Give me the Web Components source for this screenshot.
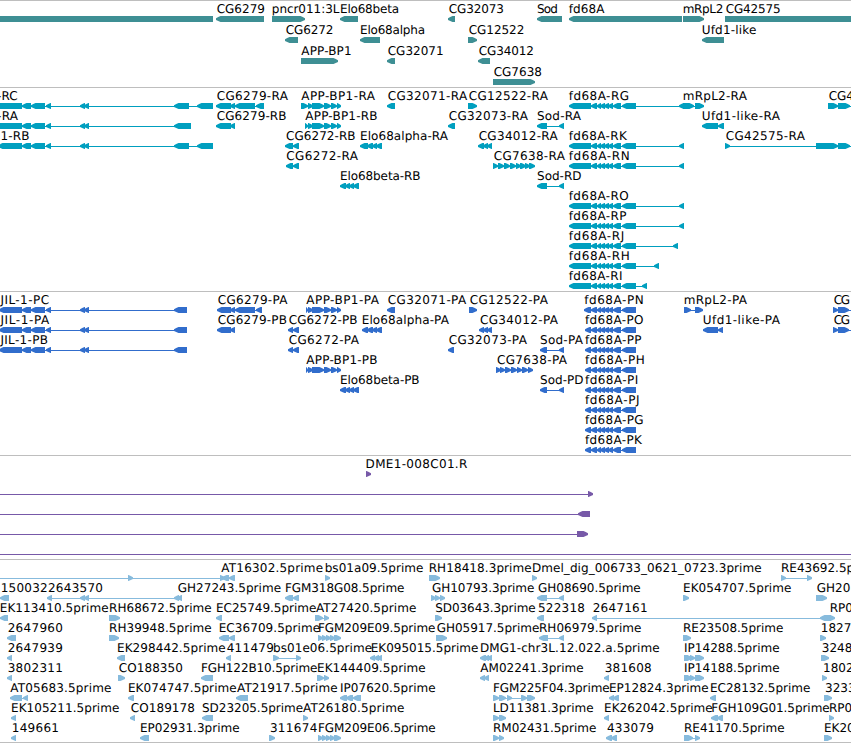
<!DOCTYPE html>
<html lang="en">
<head>
<meta charset="utf-8">
<title>Genome tracks</title>
<style>
    body {
        margin: 0;
        background: #fff;
        color: #000;
        font: 12px "DejaVu Sans", Verdana, sans-serif;
        overflow: hidden;
    }
</style>
</head>
<body>
<genome-browser></genome-browser>

<script>
// One feature per entry: [label, first ink x, last ink x (0 = natural width), glyph]
// Glyph: "<" or ">" is the strand, then the exons as start:end
const JIL = '22:31 31:45 46:51 80:85 84:89 ';
const APP = '308:313 312:324 324:331 331:337 337:341';
const FD = '591:597 597:601 600:605 604:609 608:613 613:621 622:636';
const FGM = '>318:323 322:327 326:331 330:335 334:341';

const TRACKS = [
    {
        color: '#3e8f94', row: 21, height: 87,
        rows: [
            [
                ['', 0, 0, '<-20:213'],
                ['CG6279', 216.7, 264.3, '<216:264'],
                ['pncr011:3L', 272.8, 339.7, '>272:305'],
                ['Elo68beta', 341, 398.7, '<340:358'],
                ['CG32073', 448.7, 503.3, '<448:455'],
                ['Sod', 537, 557.3, '<537:562'],
                ['fd68A', 568.7, 605.3, '<569:682'],
                ['mRpL2', 683.7, 722.7, '>683:704'],
                ['CG42575', 725.7, 780, '>725:880'],
            ],
            [
                ['CG6272', 285.7, 332.7, '<285:298'],
                ['Elo68alpha', 361, 424.7, '<360:380'],
                ['CG12522', 468.7, 523.7, '>468:477'],
                ['Ufd1-like', 702.7, 756, '<702:724'],
            ],
            [
                ['APP-BP1', 301.3, 351, '>301:338'],
                ['CG32071', 387.7, 443, '<387:395'],
                ['CG34012', 478.7, 533.3, '<478:490'],
            ],
            [
                ['CG7638', 493.7, 541.3, '>493:535'],
            ],
        ],
    },
    {
        color: '#009fbf', row: 20, height: 204,
        rows: [
            [
                ['-RC', -3, 17.3, '<-20:22 ' + JIL + '174:189 197:213'],
                ['CG6279-RA', 216.7, 288.7, '<216:231 230:235 235:255 256:264'],
                ['APP-BP1-RA', 301.3, 375.7, '>301:308 ' + APP],
                ['CG32071-RA', 387.7, 468, '<387:395'],
                ['CG12522-RA', 468.7, 548.7, '>468:477'],
                ['fd68A-RG', 568.7, 628.7, '<569:591 ' + FD + ' 679:684'],
                ['mRpL2-RA', 683.7, 747.7, '>683:694 695:704'],
                ['CG4', 828.7, 0, '>828:838 838:850 852:870'],
            ],
            [
                ['-RA', -3, 18.8, '<-20:22 ' + JIL + '174:191'],
                ['CG6279-RB', 216.7, 286.3, '<216:231 230:235'],
                ['APP-BP1-RB', 305.3, 377.3, '>305:308 ' + APP],
                ['CG32073-RA', 448.7, 528.7, '<448:455'],
                ['Sod-RA', 537, 581.7, '<537:547 559:564'],
                ['Ufd1-like-RA', 702.7, 780.7, '<702:718 718:724'],
            ],
            [
                ['1-RB', 1.5, 29.3, '<-2:22 ' + JIL + '174:189 197:213'],
                ['CG6272-RB', 286, 355.3, '<285:293 293:299'],
                ['Elo68alpha-RA', 361, 448.7, '<360:368 367:373 372:377 376:382'],
                ['CG34012-RA', 478.7, 558.5, '<478:484 483:488 487:492'],
                ['fd68A-RK', 568.7, 628, '<569:591 ' + FD + ' 679:684'],
                ['CG42575-RA', 725.7, 805.7, '>725:730 816:838 838:850 852:870'],
            ],
            [
                ['CG6272-RA', 286.3, 358.7, '<286:293 293:299'],
                ['CG7638-RA', 493.7, 565.7, '>493:498 498:504 504:510 510:516 516:521 520:526 525:530 529:535'],
                ['fd68A-RN', 568.7, 628.7, '<569:591 ' + FD + ' 679:684'],
            ],
            [
                ['Elo68beta-RB', 341, 420.3, '<340:346 345:350 349:354 353:359'],
                ['Sod-RD', 537, 581.3, '<537:547 559:564'],
            ],
            [['fd68A-RO', 568.7, 628.3, '<569:591 ' + FD + ' 679:684']],
            [['fd68A-RP', 568.7, 626.3, '<569:591 ' + FD + ' 679:684']],
            [['fd68A-RJ', 568.7, 623.7, '<569:591 ' + FD + ' 673:678']],
            [['fd68A-RH', 568.7, 628.7, '<569:591 ' + FD + ' 654:659']],
            [['fd68A-RI', 568.7, 622, '<569:591 ' + FD + ' 642:647']],
        ],
    },
    {
        color: '#316dcc', row: 20, height: 164,
        rows: [
            [
                ['JIL-1-PC', -0.6, 48.7, '<-1:22 ' + JIL + '174:187'],
                ['CG6279-PA', 217.7, 288.3, '<217:231 230:235 235:255 256:262'],
                ['APP-BP1-PA', 306.3, 379.7, '>306:308 ' + APP],
                ['CG32071-PA', 387.7, 467, '<387:395'],
                ['CG12522-PA', 469.7, 548.7, '>469:477'],
                ['fd68A-PN', 584.2, 642.7, '<584:591 ' + FD],
                ['mRpL2-PA', 684.7, 747.7, '>684:691 695:703'],
                ['CG', 833.7, 849.7, '>833:838 838:849 851:870'],
            ],
            [
                ['JIL-1-PA', -0.6, 50, '<-1:22 ' + JIL + '174:187'],
                ['CG6279-PB', 217.7, 286.7, '<217:231 230:235'],
                ['CG6272-PB', 288.7, 357.3, '<288:293 293:299'],
                ['Elo68alpha-PA', 362.7, 449.7, '<362:368 367:373 372:377 376:382'],
                ['CG34012-PA', 480, 558.7, '<479:484 483:488 487:492'],
                ['fd68A-PO', 585, 643, '<585:591 ' + FD],
                ['Ufd1-like-PA', 703.7, 780.7, '<703:718 718:723'],
                ['CG', 833.7, 849.7, '>833:838 838:849 851:870'],
            ],
            [
                ['JIL-1-PB', -0.6, 47.7, '<-1:22 ' + JIL + '174:187'],
                ['CG6272-PA', 288.7, 359.7, '<288:293 293:299'],
                ['CG32073-PA', 448.7, 527.7, '<448:454'],
                ['Sod-PA', 540, 583.7, '<540:547 559:564'],
                ['fd68A-PP', 585, 641.3, '<585:591 ' + FD],
            ],
            [
                ['APP-BP1-PB', 306.3, 377.3, '>306:308 ' + APP],
                ['CG7638-PA', 497, 567.7, '>496:501 500:505 505:511 511:517 517:522 522:528 528:533'],
                ['fd68A-PH', 585, 643.7, '<585:591 ' + FD],
            ],
            [
                ['Elo68beta-PB', 341, 419.3, '<340:346 345:350 349:354 353:359'],
                ['Sod-PD', 540, 583.3, '<540:547 559:564'],
                ['fd68A-PI', 585, 637.7, '<585:591 ' + FD],
            ],
            [['fd68A-PJ', 585, 639, '<585:591 ' + FD]],
            [['fd68A-PG', 585, 643.3, '<585:591 ' + FD]],
            [['fd68A-PK', 585, 643, '<585:591 ' + FD]],
        ],
    },
    {
        color: '#7759a8', row: 20, height: 104,
        rows: [
            [['DME1-008C01.R', 366.6, 467, '>366:371']],
            [['', 0, 0, '>-20:-10 588:593']],
            [['', 0, 0, '<-20:-10 578:590']],
            [['', 0, 0, '>-20:-10 577:588']],
            [['', 0, 0, '>-20:-10 870:880']],
        ],
    },
    {
        color: '#87bbdd', row: 20, height: 183,
        rows: [
            [
                ['', 0, 0, '>-20:-10 128:133 220:225'],
                ['AT16302.5prime', 221.3, 322.7, '<222:229 229:235'],
                ['bs01a09.5prime', 325.7, 423, '>325:330'],
                ['RH18418.3prime', 429.7, 531.3, '>429:440'],
                ['Dmel_dig_006733_0621_0723.3prime', 532.9, 761.3, '>532:537'],
                ['RE43692.5p', 782, 0, '>781:786 807:812'],
            ],
            [
                ['1500322643570', 1.7, 102.3, '<0:9'],
                ['', 0, 0, '<47:52 80:85 84:89 174:179 177:182'],
                ['GH27243.5prime', 177.7, 280.7, ''],
                ['FGM318G08.5prime', 285.9, 404, '<285:293 293:299'],
                ['GH10793.3prime', 432, 534, '>431:436 435:440 440:445'],
                ['GH08690.5prime', 538, 640.3, '<537:547 559:564'],
                ['EK054707.5prime', 684, 791, '>683:689'],
                ['GH20', 816.7, 0, '>816:827'],
            ],
            [
                ['EK113410.5prime', 0.7, 108.3, '<0:8'],
                ['RH68672.5prime', 110, 211.3, '>109:120'],
                ['EC25749.5prime', 217, 316, '<216:222'],
                ['AT27420.5prime', 316, 416, '>315:323 324:329'],
                ['SD03643.3prime', 435.3, 535.3, '>435:442'],
                ['522318', 537.9, 584.3, '<537:544'],
                ['2647161', 592.7, 647, '<592:597 820:831'],
                ['RP0', 830.7, 0, '>829:835'],
            ],
            [
                ['2647960', 7.7, 62.3, '<7:16'],
                ['RH39948.5prime', 110, 211.3, '>109:119'],
                ['EC36709.5prime', 219.7, 319.7, '<219:229 229:235'],
                ['FGM209E09.5prime', 319, 435, FGM],
                ['GH05917.5prime', 436.7, 539, '>436:447'],
                ['RH06979.5prime', 540, 641, '<539:548 559:564'],
                ['RE23508.5prime', 684, 783, '>683:691'],
                ['1827', 821.8, 0, '>820:826'],
            ],
            [
                ['2647939', 7.7, 62.3, '<7:12'],
                ['EK298442.5prime', 118, 225.3, '<117:125'],
                ['411479', 226.7, 273.3, '<226:231'],
                ['bs01e06.5prime', 274, 371.7, '>273:279 296:301'],
                ['EK095015.5prime', 371.7, 478, '<370:375 374:379 377:382'],
                ['DMG1-chr3L.12.022.a.5prime', 480.9, 659.3, '<480:486 484:489 487:492'],
                ['IP14288.5prime', 685, 779.3, '>684:692 690:695 695:704'],
                ['3248', 821.8, 0, '>821:829'],
            ],
            [
                ['3802311', 7.7, 62.3, '<7:12'],
                ['CO188350', 118.7, 182.3, '>118:125'],
                ['FGH122B10.5prime', 201.9, 317, '<201:213'],
                ['EK144409.5prime', 318, 425.3, '>317:324 324:329'],
                ['AM02241.3prime', 480.3, 583.3, '<480:485 484:489'],
                ['381608', 604.7, 651, '<604:609'],
                ['IP14188.5prime', 685, 779.3, '>684:692 690:695 695:704'],
                ['1802', 824, 0, '>822:827'],
            ],
            [
                ['AT05683.5prime', 10.3, 111, '<10:22 23:28'],
                ['EK074747.5prime', 128.9, 236.3, '<128:134'],
                ['AT21917.5prime', 237, 337.3, '<236:248'],
                ['IP07620.5prime', 341, 435.3, '<340:347 346:353 353:361'],
                ['FGM225F04.3prime', 493.9, 609.3, '>493:499 499:506 507:512 521:527 527:535'],
                ['EP12824.3prime', 610, 708.3, '<609:614 613:619'],
                ['EC28132.5prime', 711, 810, '<710:716'],
                ['3233', 825, 0, '>824:832'],
            ],
            [
                ['EK105211.5prime', 12, 119, '<11:16'],
                ['CO189178', 130.7, 194.3, '<130:135'],
                ['SD23205.5prime', 202, 302.7, '<202:213'],
                ['AT26180.5prime', 303, 404, '>303:308'],
                ['LD11381.3prime', 493.9, 593.3, '>493:499 499:506'],
                ['EK262042.5prime', 605, 712.3, '<604:609'],
                ['FGH109G01.5prime', 712.3, 829.3, '<711:718 717:723'],
                ['RP0', 830, 0, '>829:834'],
            ],
            [
                ['149661', 12.8, 58.3, '<11:16'],
                ['EP02931.3prime', 140.9, 239.3, '<140:149'],
                ['311674', 269.9, 316.7, '>269:275'],
                ['FGM209E06.5prime', 319, 435.3, FGM],
                ['RM02431.5prime', 493.9, 596, '>493:499 499:504'],
                ['433079', 607, 653.3, '<606:612 611:617'],
                ['RE41170.5prime', 685, 784.3, '>684:693 695:700'],
                ['EK20', 825, 0, '>824:832'],
            ],
        ],
    },
];

const pen = document.createElement('canvas').getContext('2d');
pen.font = '12px "DejaVu Sans", Verdana, sans-serif';

// Fit a label between two ink positions: returns its origin and letter-spacing
function fitLabel(text, from, to) {
    const m = pen.measureText(text);
    const ink = m.actualBoundingBoxRight + m.actualBoundingBoxLeft;
    return {
        x: from + m.actualBoundingBoxLeft,
        spacing: to ? (to - from - ink) / (text.length - 1) : 0,
    };
}

// A bar of 6px with a blunt arrow head of up to 5px on the strand's side
function exonPoints(start, end, strand) {
    const head = Math.min(5, end - start);
    const tip = strand === '<' ? start : end;
    const back = strand === '<' ? end : start;
    const dir = strand === '<' ? 1 : -1;
    const mid = tip + dir * head * 0.45;
    const full = tip + dir * head * 0.9;
    return `${tip},2.3 ${mid},1 ${full},0 ${back},0 ${back},6 ${full},6 ${mid},5 ${tip},3.9`;
}

class GeneFeature extends HTMLElement {
    constructor() {
        super();
        this.shadowDOM = this.attachShadow({mode: 'open'});
    }

    set feature(value) {
        this._feature = value;
        this.render();
    }

    render() {
        const [label, from, to, glyph] = this._feature;
        const strand = glyph[0];
        const exons = glyph ? glyph.slice(1).split(' ').map(e => e.split(':').map(Number)) : [];
        const left = exons.length ? exons[0][0] : Math.floor(from);
        const fit = label ? fitLabel(label, from, to) : {x: left, spacing: 0};
        const right = exons.length ? exons[exons.length - 1][1] : left;

        this.shadowDOM.innerHTML = `
            <style>
                :host {
                    position: absolute;
                    top: 0;
                    left: ${left}px;
                    display: block;
                }

                .label {
                    height: 15px;
                    line-height: 17px;
                    margin-left: ${(fit.x - left).toFixed(2)}px;
                    letter-spacing: ${fit.spacing.toFixed(3)}px;
                    white-space: nowrap;
                    text-rendering: geometricPrecision;
                }

                svg {
                    display: block;
                    overflow: visible;
                    fill: var(--track-color);
                }
            </style>
            <div class="label">${label}</div>
            <svg width="${right - left}" height="6">
                ${exons.length > 1 ? `<rect y="3" width="${right - left}" height="1"/>` : ''}
                ${exons.map(([s, e]) => `<polygon points="${exonPoints(s - left, e - left, strand)}"/>`).join('')}
            </svg>`;
    }
}

customElements.define('gene-feature', GeneFeature);

class TrackRow extends HTMLElement {
    constructor() {
        super();
        this.shadowDOM = this.attachShadow({mode: 'open'});
        this.shadowDOM.innerHTML = `
            <style>
                :host {
                    display: block;
                    position: relative;
                    height: var(--row-height);
                }
            </style>
            <slot></slot>`;
    }
}

customElements.define('track-row', TrackRow);

class GenomeTrack extends HTMLElement {
    constructor() {
        super();
        this.shadowDOM = this.attachShadow({mode: 'open'});
    }

    set track(value) {
        this._track = value;
        this.render();
    }

    render() {
        const {color, row, height, rows} = this._track;
        this.shadowDOM.innerHTML = `
            <style>
                :host {
                    display: flex;
                    flex-direction: column;
                    box-sizing: border-box;
                    height: ${height}px;
                    border-top: 1px solid #bebebe;
                    --track-color: ${color};
                    --row-height: ${row}px;
                }
            </style>`;
        rows.forEach(features => {
            const line = document.createElement('track-row');
            features.forEach(f => {
                const el = document.createElement('gene-feature');
                el.feature = f;
                line.appendChild(el);
            });
            this.shadowDOM.appendChild(line);
        });
    }
}

customElements.define('genome-track', GenomeTrack);

class GenomeBrowser extends HTMLElement {
    constructor() {
        super();
        this.shadowDOM = this.attachShadow({mode: 'open'});
    }

    connectedCallback() {
        this.render();
    }

    render() {
        this.shadowDOM.innerHTML = `
            <style>
                :host {
                    display: flex;
                    flex-direction: column;
                    width: 851px;
                    overflow: hidden;
                    border-bottom: 1px solid #bebebe;
                }
            </style>`;
        TRACKS.forEach(t => {
            const el = document.createElement('genome-track');
            el.track = t;
            this.shadowDOM.appendChild(el);
        });
    }
}

customElements.define('genome-browser', GenomeBrowser);
</script>
</body>
</html>
